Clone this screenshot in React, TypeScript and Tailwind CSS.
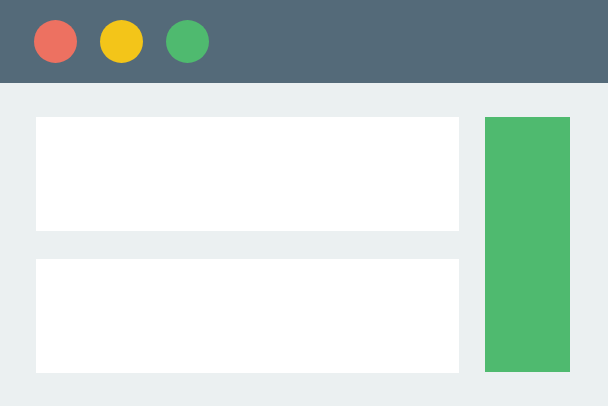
export default function App() {
  return (
    <div className="w-[608px] h-[406px] bg-[#ebf0f1] flex flex-col overflow-hidden">
      <div className="h-[83px] bg-[#546a79] flex items-center pl-[34px] gap-[23px] shrink-0">
        <div className="w-[43px] h-[43px] rounded-full bg-[#ed7161]" />
        <div className="w-[43px] h-[43px] rounded-full bg-[#f3c519]" />
        <div className="w-[43px] h-[43px] rounded-full bg-[#4fba6f]" />
      </div>
      <div className="flex pl-[36px] pt-[34px] gap-[26px]">
        <div className="flex flex-col gap-[28px]">
          <div className="w-[423px] h-[114px] bg-white" />
          <div className="w-[423px] h-[114px] bg-white" />
        </div>
        <div className="w-[85px] h-[255px] bg-[#4fba6f]" />
      </div>
    </div>
  );
}
